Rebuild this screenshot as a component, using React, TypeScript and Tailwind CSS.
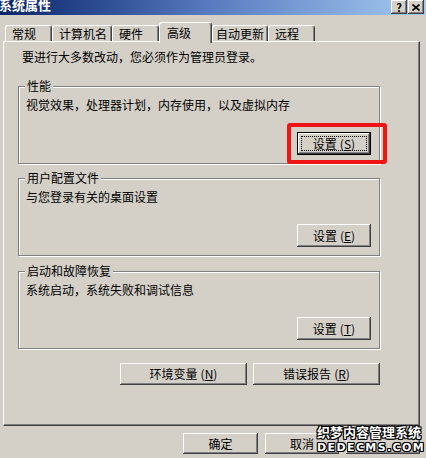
import type { ReactNode } from "react";

const raised =
  "bg-[#d4d0c8] shadow-[inset_-1px_-1px_#404040,inset_1px_1px_#ffffff,inset_-2px_-2px_#808080]";

function TitleBtn({ children }: { children: ReactNode }) {
  return (
    <div className={`flex h-[14px] w-[16px] items-center justify-center ${raised}`}>
      {children}
    </div>
  );
}

function Accel({ label, accel }: { label: string; accel?: string }) {
  return (
    <span className="whitespace-nowrap">
      {label}
      {accel && (
        <span className="ml-[3px]">
          (<span className="underline underline-offset-1">{accel}</span>)
        </span>
      )}
    </span>
  );
}

function Button({
  label,
  accel,
  className = "",
}: {
  label?: string;
  accel?: string;
  className?: string;
}) {
  return (
    <button type="button" className={`flex items-center justify-center text-black ${raised} ${className}`}>
      {label && <Accel label={label} accel={accel} />}
    </button>
  );
}

// focused default-style button with dotted focus rect
function FocusButton({ label, accel }: { label: string; accel: string }) {
  return (
    <button
      type="button"
      className="relative flex h-[23px] w-[74px] items-center justify-center border border-black bg-[#d4d0c8] shadow-[inset_-1px_-1px_#404040,inset_1px_1px_#ffffff,inset_-2px_-2px_#808080]"
    >
      <span className="absolute inset-[3px] border border-dotted border-black" />
      <Accel label={label} accel={accel} />
    </button>
  );
}

function Group({
  title,
  desc,
  accel,
  marked = false,
  className = "",
}: {
  title: string;
  desc: string;
  accel: string;
  marked?: boolean;
  className?: string;
}) {
  return (
    <fieldset
      className={`h-[85px] w-[362px] border border-[#808080] shadow-[1px_1px_0_#ffffff,inset_1px_1px_0_#ffffff] ${className}`}
    >
      <legend className="ml-[6px] bg-[#d4d0c8] px-[2px] leading-[14px]">{title}</legend>
      <div className="flex h-[70px] flex-col pl-[7px]">
        <p className="mt-[5px]">{desc}</p>
        <div className="mt-auto mb-[8px] mr-[8px] flex justify-end">
          {marked ? (
            <div className="relative">
              <FocusButton label="设置" accel={accel} />
              {/* red annotation box */}
              <div className="pointer-events-none absolute -top-[9px] -bottom-[9px] -left-[10px] -right-[16px] rounded-[3px] border-[4px] border-[#f01414]" />
            </div>
          ) : (
            <Button label="设置" accel={accel} className="h-[23px] w-[74px]" />
          )}
        </div>
      </div>
    </fieldset>
  );
}

const tabs = [
  { name: "常规", w: "w-[47px] pl-[6px]" },
  { name: "计算机名", w: "w-[60px] pl-[6px]" },
  { name: "硬件", w: "w-[47px] pl-[6px]" },
  { name: "高级", w: "w-[53px] pl-[7px]", active: true },
  { name: "自动更新", w: "w-[56px] pl-[3px]" },
  { name: "远程", w: "w-[47px] pl-[6px]" },
];

export default function App() {
  return (
    <div className="relative h-[458px] w-[426px] overflow-hidden bg-[#d4d0c8] font-['Noto_Sans_CJK_SC',sans-serif] text-[12px] leading-[14px] text-black">
      {/* Title bar */}
      <div className="flex h-[15px] items-start justify-between bg-gradient-to-r from-[#0a246a] via-[#5a7cc0] to-[#a6caf0]">
        <span className="-mt-[2px] -ml-[1px] text-[13px] font-bold leading-[13px] text-white">
          系统属性
        </span>
        <div className="mr-[2px] flex gap-[1px]">
          <TitleBtn>
            <span className="text-[11px] font-bold leading-none">?</span>
          </TitleBtn>
          <TitleBtn>
            <svg width="8" height="7" viewBox="0 0 8 7">
              <path d="M0.5 0.5 L7.5 6.5 M7.5 0.5 L0.5 6.5" stroke="#000" strokeWidth="1.6" />
            </svg>
          </TitleBtn>
        </div>
      </div>

      {/* Tabs */}
      <div className="mt-[7px] flex h-[19px] items-end pl-[5px]">
        {tabs.map((t) =>
          t.active ? (
            <div
              key={t.name}
              className={`relative z-10 -mb-[2px] flex h-[21px] ${t.w} items-start rounded-t-[3px] border-t border-l border-r border-t-white border-l-white border-r-[#404040] bg-[#d4d0c8] pt-[3px] shadow-[inset_-1px_0_#808080]`}
            >
              {t.name}
            </div>
          ) : (
            <div
              key={t.name}
              className={`flex h-[16px] ${t.w} items-center whitespace-nowrap rounded-t-[3px] border-t border-l border-r border-t-white border-l-white border-r-[#404040] shadow-[inset_-1px_0_#808080]`}
            >
              {t.name}
            </div>
          )
        )}
      </div>

      {/* Panel */}
      <div className="mx-[3px] flex h-[385px] w-[417px] flex-col border border-t-white border-l-white border-r-[#404040] border-b-[#404040] pt-[8px] pl-[14px] shadow-[inset_-1px_-1px_#808080]">
        <p className="pl-[4px]">要进行大多数改动，您必须作为管理员登录。</p>

        <Group
          className="mt-[15px]"
          title="性能"
          desc="视觉效果，处理器计划，内存使用，以及虚拟内存"
          accel="S"
          marked
        />
        <Group className="mt-[7px]" title="用户配置文件" desc="与您登录有关的桌面设置" accel="E" />
        <Group className="mt-[8px]" title="启动和故障恢复" desc="系统启动，系统失败和调试信息" accel="T" />

        <div className="mt-[14px] flex w-[362px] justify-end gap-[6px]">
          <Button label="环境变量" accel="N" className="h-[22px] w-[127px]" />
          <Button label="错误报告" accel="R" className="h-[22px] w-[127px]" />
        </div>
      </div>

      {/* Dialog buttons (third one is hidden under the watermark) */}
      <div className="mt-[7px] flex h-[21px] justify-end gap-[7px] pr-[6px]">
        <Button label="确定" className="h-[21px] w-[75px]" />
        <Button label="取消" className="h-[21px] w-[74px]" />
        <Button className="h-[21px] w-[74px]" />
      </div>

      {/* Watermark */}
      <div className="pointer-events-none absolute top-[424px] left-[317px] flex flex-col font-bold text-white [text-shadow:1px_0_#000,-1px_0_#000,0_1px_#000,0_-1px_#000,1px_1px_#000,-1px_-1px_#000,1px_-1px_#000,-1px_1px_#000]">
        <span className="text-[13px] leading-[16px]">织梦内容管理系统</span>
        <span className="font-['DejaVu_Sans',sans-serif] text-[11px] leading-[16px] tracking-[1.4px]">
          DEDECMS.COM
        </span>
      </div>
    </div>
  );
}
